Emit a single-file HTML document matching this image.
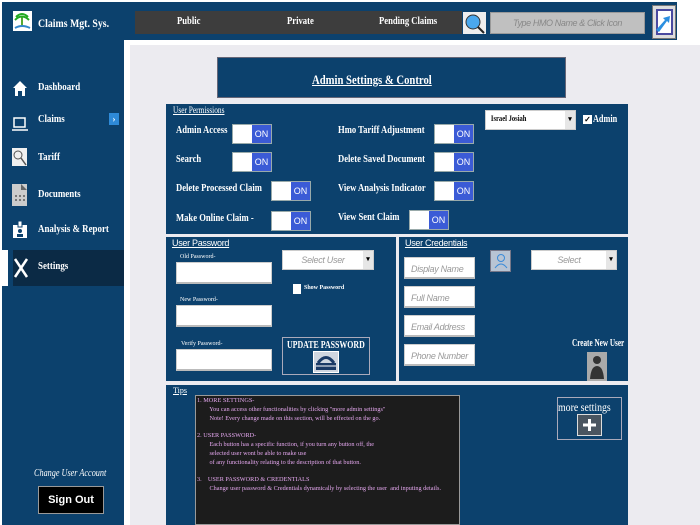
<!DOCTYPE html>
<html><head><meta charset="utf-8"><style>
*{margin:0;padding:0;box-sizing:border-box}
body{width:700px;height:525px;background:#fff;position:relative;overflow:hidden;font-family:"Liberation Serif",serif;font-weight:bold;color:#fff}
.a{position:absolute;white-space:nowrap}
.n{transform:scaleX(0.82);transform-origin:0 0}
.blue{background:#0c416d}
.t{font-size:10.5px;white-space:nowrap;transform:scaleX(0.82);transform-origin:0 0}
.tog{position:absolute;width:40px;height:20px;background:#fff;border:1px solid #9aa}
.tog span{position:absolute;right:0;top:0;width:19px;height:18px;background:#3b5bd6;color:#fff;font:9px "Liberation Sans",sans-serif;display:flex;align-items:center;justify-content:center}
.inp{position:absolute;background:#fff;border:1px solid #ccc;border-bottom:2px solid #bbb;overflow:hidden}
.ph{font-style:italic;font-weight:normal;color:#999;font-size:9px;padding:6px 6px;font-family:"Liberation Sans",sans-serif;white-space:nowrap;letter-spacing:-0.3px}
.lbl{font-size:6px;font-weight:normal;color:#fff}
.sel{position:absolute;background:#fff;border:1px solid #ccc}
.sel b{position:absolute;right:0;top:0;bottom:0;width:10px;background:#e6e6e6;font-size:7px;color:#000;text-align:center;line-height:16px}
.nav{position:absolute;left:38px;font-size:10.5px;transform:scaleX(0.85);transform-origin:0 0;white-space:nowrap}
</style></head><body>
<div class="a blue" style="left:2px;top:2px;width:675px;height:38px"></div>
<div class="a" style="left:13px;top:11px;width:19px;height:20px;background:#fff"><svg width="19" height="20"><path d="M9 5 L9 15" stroke="#5a3" stroke-width="2"/><path d="M3 6 Q9 0 15 6 M2 9 Q9 2 16 9" stroke="#2a2" fill="none" stroke-width="2"/><path d="M2 17 Q9 13 17 17" stroke="#38c" stroke-width="2" fill="none"/></svg></div>
<div class="a n" style="left:38px;top:16px;font-size:12px">Claims Mgt. Sys.</div>
<div class="a" style="left:135px;top:11px;width:327px;height:23px;background:#3d3d3d"></div>
<div class="a t" style="left:177px;top:16px">Public</div>
<div class="a t" style="left:287px;top:16px">Private</div>
<div class="a t" style="left:379px;top:16px">Pending Claims</div>
<div class="a" style="left:463px;top:12px;width:23px;height:22px;background:#eee"><svg width="23" height="22"><circle cx="10" cy="10" r="7" fill="#4aa8ee" stroke="#333"/><line x1="15" y1="15" x2="21" y2="21" stroke="#222" stroke-width="2"/></svg></div>
<div class="a" style="left:490px;top:12px;width:155px;height:22px;background:#c0c0c0;border:1px solid #999;color:#888;font:italic 9px 'Liberation Sans',sans-serif;text-align:center;line-height:20px;letter-spacing:-0.4px">Type HMO Name &amp; Click Icon</div>
<div class="a" style="left:652px;top:5px;width:24px;height:34px;background:#ddd;border:1px solid #777"><svg width="22" height="32"><rect x="4" y="4" width="15" height="24" fill="#fff" stroke="#4a4aa0" stroke-width="2"/><path d="M3 24 L12 14 L10 12 L17 10 L16 17 L14 15 L6 26Z" fill="#2b8fe0"/></svg></div>
<div class="a blue" style="left:2px;top:40px;width:122px;height:485px"></div>
<div class="a" style="left:124px;top:40px;width:3px;height:485px;background:#fff"></div>
<div class="a" style="left:127px;top:40px;width:573px;height:485px;background:#fff"></div>
<div class="a" style="left:130px;top:45px;width:570px;height:480px;background:#ecebf0"></div>
<svg class="a" style="left:12px;top:80px" width="16" height="17"><path d="M8 1 L1 8 L3 8 L3 16 L13 16 L13 8 L15 8Z" fill="#fff"/><rect x="6" y="11" width="4" height="5" fill="#0c416d"/></svg>
<div class="nav" style="top:82px">Dashboard</div>
<svg class="a" style="left:12px;top:116px" width="16" height="16"><rect x="2" y="2" width="11" height="9" fill="none" stroke="#fff" stroke-width="1.5"/><line x1="0" y1="14" x2="16" y2="14" stroke="#fff" stroke-width="1.5"/></svg>
<div class="nav" style="top:114px">Claims</div>
<div class="a" style="left:109px;top:113px;width:10px;height:12px;background:#2e8ad8;font-size:9px;text-align:center;line-height:12px">›</div>
<div class="a" style="left:12px;top:148px;width:15px;height:18px;background:#f0f0f0"><svg width="15" height="18"><circle cx="6" cy="7" r="4" fill="none" stroke="#555"/><line x1="9" y1="10" x2="14" y2="17" stroke="#555" stroke-width="1.5"/></svg></div>
<div class="nav" style="top:152px">Tariff</div>
<div class="a" style="left:12px;top:184px;width:15px;height:22px;background:#ccc"><svg width="15" height="22"><path d="M9 0 L15 6 L9 6Z" fill="#666"/><g fill="#777"><rect x="3" y="11" width="2" height="2"/><rect x="7" y="11" width="2" height="2"/><rect x="11" y="11" width="2" height="2"/><rect x="3" y="15" width="2" height="2"/><rect x="7" y="15" width="2" height="2"/><rect x="11" y="15" width="2" height="2"/></g></svg></div>
<div class="nav" style="top:189px">Documents</div>
<svg class="a" style="left:13px;top:221px" width="14" height="17"><rect x="0" y="4" width="14" height="13" fill="#fff"/><rect x="5" y="0" width="4" height="6" fill="#fff" stroke="#0c416d"/><circle cx="7" cy="10" r="2" fill="#0c416d"/><rect x="4" y="13" width="6" height="3" fill="#0c416d"/></svg>
<div class="nav" style="top:224px">Analysis &amp; Report</div>
<div class="a" style="left:13px;top:250px;width:111px;height:36px;background:#0b2a45"></div>
<div class="a" style="left:2px;top:250px;width:6px;height:36px;background:#fff"></div>
<svg class="a" style="left:13px;top:257px" width="16" height="22"><path d="M2 2 L14 20 M14 2 L2 20" stroke="#fff" stroke-width="2.5"/></svg>
<div class="nav" style="top:261px">Settings</div>
<div class="a n" style="left:34px;top:468px;font-size:10px;font-style:italic;font-weight:normal">Change User Account</div>
<div class="a" style="left:38px;top:486px;width:66px;height:28px;background:#000;border:1px solid #999;font:bold 11px 'Liberation Sans',sans-serif;text-align:center;line-height:26px">Sign Out</div>
<div class="a blue" style="left:217px;top:57px;width:349px;height:41px;border:1px solid #667"></div>
<div class="a n" style="left:312px;top:72px;font-size:13px;text-decoration:underline">Admin Settings &amp; Control</div>
<div class="a blue" style="left:166px;top:104px;width:462px;height:130px"></div>
<div class="a n" style="left:173px;top:105px;font-size:9px;font-weight:normal;text-decoration:underline">User Permissions</div>
<div class="a t" style="left:176px;top:125px">Admin Access</div>
<div class="tog" style="left:232px;top:124px"><span>ON</span></div>
<div class="a t" style="left:176px;top:154px">Search</div>
<div class="tog" style="left:232px;top:152px"><span>ON</span></div>
<div class="a t" style="left:176px;top:183px">Delete Processed Claim</div>
<div class="tog" style="left:271px;top:181px"><span>ON</span></div>
<div class="a t" style="left:176px;top:213px">Make Online Claim -</div>
<div class="tog" style="left:271px;top:211px"><span>ON</span></div>
<div class="a t" style="left:338px;top:125px">Hmo Tariff Adjustment</div>
<div class="tog" style="left:434px;top:124px"><span>ON</span></div>
<div class="a t" style="left:338px;top:154px">Delete Saved Document</div>
<div class="tog" style="left:434px;top:152px"><span>ON</span></div>
<div class="a t" style="left:338px;top:183px">View Analysis Indicator</div>
<div class="tog" style="left:434px;top:181px"><span>ON</span></div>
<div class="a t" style="left:338px;top:212px">View Sent Claim</div>
<div class="tog" style="left:409px;top:210px"><span>ON</span></div>
<div class="sel" style="left:485px;top:110px;width:91px;height:20px"><div class="n" style="color:#000;font-size:8px;padding:3px 6px">Israel Josiah</div><b>▾</b></div>
<div class="a" style="left:583px;top:115px;width:9px;height:9px;background:#fff;color:#000;font-size:8px;line-height:9px;text-align:center">✓</div>
<div class="a n" style="left:593px;top:114px;font-size:10px">Admin</div>
<div class="a blue" style="left:166px;top:237px;width:230px;height:144px"></div>
<div class="a" style="left:172px;top:238px;font-size:9px;font-weight:normal;text-decoration:underline;font-family:'Liberation Sans',sans-serif;letter-spacing:-0.3px">User Password</div>
<div class="a lbl" style="left:180px;top:254px">Old Password-</div>
<div class="inp" style="left:176px;top:262px;width:96px;height:22px"></div>
<div class="a lbl" style="left:180px;top:297px">New Password-</div>
<div class="inp" style="left:176px;top:305px;width:96px;height:22px"></div>
<div class="a lbl" style="left:181px;top:341px">Verify Password-</div>
<div class="inp" style="left:176px;top:349px;width:96px;height:22px"></div>
<div class="sel" style="left:282px;top:250px;width:92px;height:20px"><div class="ph" style="padding:4px 0;text-align:center;padding-right:10px">Select User</div><b>▾</b></div>
<div class="a" style="left:293px;top:284px;width:8px;height:10px;background:#fff"></div>
<div class="a" style="left:304px;top:285px;font-size:6px">Show Password</div>
<div class="a" style="left:282px;top:337px;width:88px;height:38px;border:1px solid #aab"></div>
<div class="a" style="left:287px;top:340px;font-size:10.5px;transform:scaleX(0.75);transform-origin:0 0">UPDATE PASSWORD</div>
<div class="a" style="left:313px;top:351px;width:26px;height:22px;background:#cfd6e0;border:1px solid #fff"><svg width="24" height="20"><path d="M4 11 Q12 0 20 11" stroke="#1a3a66" stroke-width="3" fill="none"/><rect x="2" y="11" width="20" height="7" fill="#1a3a66"/><line x1="2" y1="14" x2="22" y2="14" stroke="#fff"/></svg></div>
<div class="a blue" style="left:399px;top:237px;width:229px;height:144px"></div>
<div class="a" style="left:405px;top:238px;font-size:9px;font-weight:normal;text-decoration:underline;font-family:'Liberation Sans',sans-serif;letter-spacing:-0.3px">User Credentials</div>
<div class="inp" style="left:404px;top:257px;width:71px;height:22px"><div class="ph">Display Name</div></div>
<div class="inp" style="left:404px;top:286px;width:71px;height:22px"><div class="ph">Full Name</div></div>
<div class="inp" style="left:404px;top:315px;width:71px;height:22px"><div class="ph">Email Address</div></div>
<div class="inp" style="left:404px;top:344px;width:71px;height:22px"><div class="ph">Phone Number</div></div>
<div class="a" style="left:490px;top:250px;width:21px;height:22px;background:#b8c4d4;border:1px solid #778"><svg width="19" height="20"><circle cx="10" cy="7" r="3.5" fill="none" stroke="#3a8ad8"/><path d="M4 17 Q10 9 16 17" fill="none" stroke="#3a8ad8"/></svg></div>
<div class="sel" style="left:531px;top:250px;width:86px;height:20px"><div class="ph" style="padding:4px 0;text-align:center;padding-right:10px">Select</div><b>▾</b></div>
<div class="a" style="left:572px;top:338px;font-size:10px;transform:scaleX(0.72);transform-origin:0 0">Create New User</div>
<div class="a" style="left:587px;top:352px;width:20px;height:29px;background:#aaa"><svg width="20" height="29"><circle cx="10" cy="8" r="4" fill="#333"/><path d="M3 27 Q4 14 10 14 Q16 14 17 27Z" fill="#333"/></svg></div>
<div class="a blue" style="left:166px;top:385px;width:462px;height:140px"></div>
<div class="a" style="left:173px;top:386px;font-size:8px;font-weight:normal;text-decoration:underline">Tips</div>
<div class="a" style="left:195px;top:395px;width:265px;height:130px;background:#1c1c1c;border:1px solid #999"></div>
<div class="a" style="left:197px;top:397px;color:#e6a8f0;font-size:6.5px;font-weight:normal;line-height:8.8px;white-space:pre;transform:scaleX(0.96);transform-origin:0 0">1. MORE SETTINGS-
        You can access other functionalities by clicking "more admin settings"
        Note! Every change made on this section, will be effected on the go.

2. USER PASSWORD-
        Each button has a specific function, if you turn any button off, the
        selected user wont be able to make use
        of any functionality relating to the description of that button.

3.    USER PASSWORD &amp; CREDENTIALS
        Change user password &amp; Credentials dynamically by selecting the user  and inputing details.</div>
<div class="a" style="left:557px;top:397px;width:65px;height:43px;border:1px solid #aab"></div>
<div class="a n" style="left:558px;top:400px;font-size:12px;font-weight:normal">more settings</div>
<div class="a" style="left:577px;top:414px;width:25px;height:22px;background:#4a5560;border:1px solid #ddd"><svg width="23" height="20"><path d="M11.5 4 V16 M5 10 H18" stroke="#fff" stroke-width="3"/></svg></div>
</body></html>
